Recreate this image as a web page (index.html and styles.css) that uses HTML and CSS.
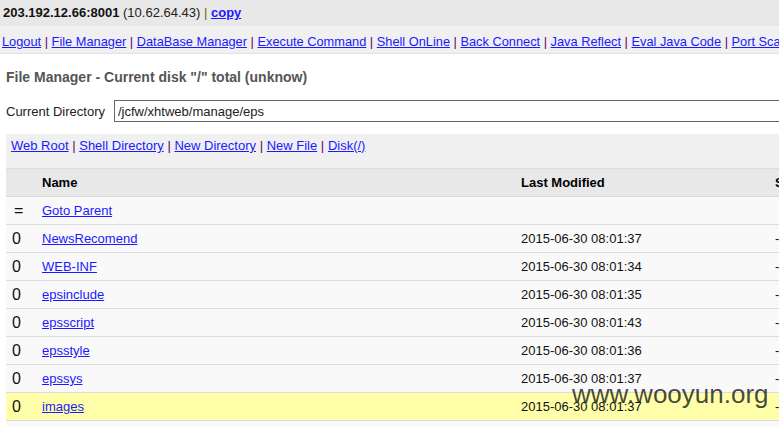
FILE: index.html
```html
<!DOCTYPE html>
<html>
<head>
<meta charset="utf-8">
<link rel="stylesheet" href="styles.css">
</head>
<body>
<div class="top"><b>203.192.12.66:8001</b> (10.62.64.43) <span class="sep1">|</span> <a href="#" class="copy">copy</a></div>
<div class="nav">
<a href="#">Logout</a> <span class="sep">|</span> <a href="#">File Manager</a> <span class="sep">|</span> <a href="#">DataBase Manager</a> <span class="sep">|</span> <a href="#">Execute Command</a> <span class="sep">|</span> <a href="#">Shell OnLine</a> <span class="sep">|</span> <a href="#">Back Connect</a> <span class="sep">|</span> <a href="#">Java Reflect</a> <span class="sep">|</span> <a href="#">Eval Java Code</a> <span class="sep">|</span> <a href="#">Port Scan</a> <span class="sep">|</span> <a href="#">Download Remote File</a>
</div>
<div class="main">
  <h2 class="title">File Manager - Current disk "/" total (unknow)</h2>
  <div class="dir">
    <label class="dir-label">Current Directory</label>
    <input class="dir-input" type="text" value="/jcfw/xhtweb/manage/eps">
  </div>
  <div class="box">
    <a href="#">Web Root</a> <span class="sep">|</span> <a href="#">Shell Directory</a> <span class="sep">|</span> <a href="#">New Directory</a> <span class="sep">|</span> <a href="#">New File</a> <span class="sep">|</span> <a href="#">Disk(/)</a>
  </div>
  <table class="files">
    <colgroup>
      <col class="c1"><col class="c2"><col class="c3"><col class="c4"><col class="c5">
    </colgroup>
    <thead>
      <tr><th></th><th>Name</th><th>Last Modified</th><th>Size</th><th>Read/Write/Execute</th></tr>
    </thead>
    <tbody>
      <tr><td class="ico eq">=</td><td><a href="#">Goto Parent</a></td><td></td><td></td><td></td></tr>
      <tr><td class="ico">0</td><td><a href="#">NewsRecomend</a></td><td>2015-06-30 08:01:37</td><td>--</td><td></td></tr>
      <tr><td class="ico">0</td><td><a href="#">WEB-INF</a></td><td>2015-06-30 08:01:34</td><td>--</td><td></td></tr>
      <tr><td class="ico">0</td><td><a href="#">epsinclude</a></td><td>2015-06-30 08:01:35</td><td>--</td><td></td></tr>
      <tr><td class="ico">0</td><td><a href="#">epsscript</a></td><td>2015-06-30 08:01:43</td><td>--</td><td></td></tr>
      <tr><td class="ico">0</td><td><a href="#">epsstyle</a></td><td>2015-06-30 08:01:36</td><td>--</td><td></td></tr>
      <tr><td class="ico">0</td><td><a href="#">epssys</a></td><td>2015-06-30 08:01:37</td><td>--</td><td></td></tr>
      <tr class="hl"><td class="ico">0</td><td><a href="#">images</a></td><td>2015-06-30 08:01:37</td><td>--</td><td></td></tr>
      <tr><td class="ico">0</td><td><a href="#">js</a></td><td>2015-06-30 08:01:37</td><td>--</td><td></td></tr>
    </tbody>
  </table>
</div>
<div class="wm">www.wooyun.org</div>
</body>
</html>
```
FILE: styles.css
```css
html { overflow: hidden; }
body {
  margin: 0;
  font-family: "Liberation Sans", Arial, sans-serif;
  font-size: 13px;
  color: #000;
  background: #fff;
  white-space: nowrap;
}
a { color: #1a1aff; text-decoration: underline; }
.top {
  background: #e8e8e8;
  height: 26px;
  line-height: 26px;
  padding-left: 3px;
  border-bottom: 1px solid #f6f6f6;
  color: #222;
}
.top b { color: #111; }
.copy { font-weight: bold; }
.sep1 { color: #8a5a00; }
.sep { color: #660066; }
.nav {
  background: #f0f0f0;
  height: 26px;
  line-height: 30px;
  font-size: 12.8px;
  padding-left: 2px;
  border-bottom: 1px solid #e2e2e2;
  overflow: hidden;
}
.main { padding: 0 0 0 6px; width: 1200px; }
.title {
  margin: 0;
  padding-top: 14px;
  height: 32px;
  line-height: 18px;
  font-size: 14px;
  font-weight: bold;
  color: #555;
}
.dir {
  display: flex;
  align-items: center;
  height: 22px;
}
.dir-label { width: 108px; color: #222; }
.dir-input {
  box-sizing: border-box;
  width: 1000px;
  height: 22px;
  margin: 0;
  border: 1px solid #666;
  padding: 0 3px;
  font: 13px "Liberation Sans", Arial, sans-serif;
  color: #222;
}
.box {
  margin-top: 12px;
  background: #f0f0f0;
  height: 34px;
  line-height: 24px;
  padding-left: 5px;
  box-sizing: border-box;
}
.files {
  border-collapse: collapse;
  table-layout: fixed;
  width: 1100px;
  border-top: 1px solid #dcdcdc;
}
.c1 { width: 30px; }
.c2 { width: 479px; }
.c3 { width: 254px; }
.c4 { width: 120px; }
.c5 { width: 217px; }
.files th {
  background: #e8e8e8;
  height: 27px;
  text-align: left;
  padding: 0 6px;
  font-weight: bold;
  border-bottom: 1px solid #dadada;
}
.files td {
  background: #f9f9f9;
  height: 27px;
  padding: 0 6px;
  border-bottom: 1px solid #dcdcdc;
  color: #111;
}
.files td.ico { font-size: 16px; padding-left: 6px; }
.files td.eq { padding-left: 8px; }
.files tr.hl td { background: #ffffaa; }
.wm {
  position: absolute;
  left: 572px;
  top: 379px;
  font-family: "Liberation Sans", Arial, sans-serif;
  font-size: 26px;
  color: rgba(40, 40, 40, 0.85);
}
```
